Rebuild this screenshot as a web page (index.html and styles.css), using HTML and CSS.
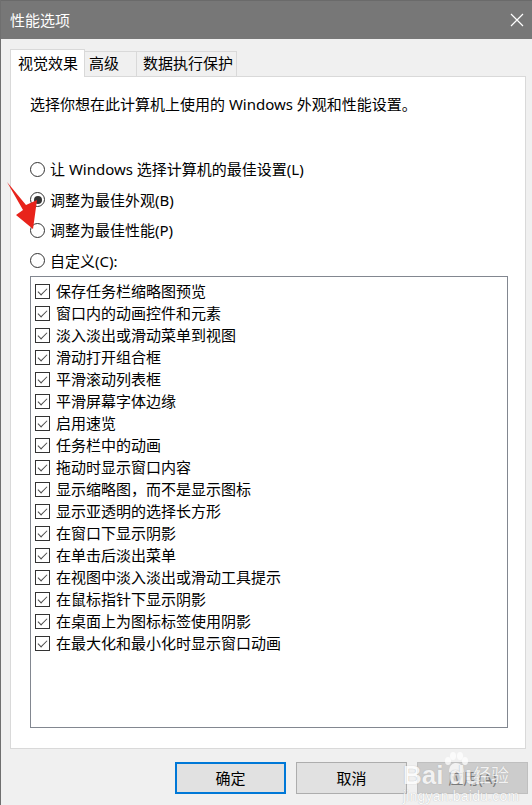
FILE: index.html
```html
<!DOCTYPE html>
<html lang="zh-CN">
<head>
<meta charset="utf-8">
<title>性能选项</title>
<link rel="stylesheet" href="styles.css">
</head>
<body>
<div class="window">
  <div class="titlebar">
    <span class="title">性能选项</span>
    <svg class="close" width="14" height="14" viewBox="0 0 14 14"><path d="M1 1 L13 13 M13 1 L1 13" stroke="#fff" stroke-width="1.2" fill="none"/></svg>
  </div>
  <div class="tabs">
    <div class="tab tab-1 active">视觉效果</div>
    <div class="tab tab-2">高级</div>
    <div class="tab tab-3">数据执行保护</div>
  </div>
  <div class="panel">
    <p class="desc">选择你想在此计算机上使用的 Windows 外观和性能设置。</p>
    <div class="radios">
      <div class="radio"><span class="rb"></span>让 Windows 选择计算机的最佳设置(L)</div>
      <div class="radio"><span class="rb checked"></span>调整为最佳外观(B)</div>
      <div class="radio"><span class="rb"></span>调整为最佳性能(P)</div>
      <div class="radio"><span class="rb"></span>自定义(C):</div>
    </div>
    <div class="list">
      <div class="item"><span class="cb"></span>保存任务栏缩略图预览</div>
      <div class="item"><span class="cb"></span>窗口内的动画控件和元素</div>
      <div class="item"><span class="cb"></span>淡入淡出或滑动菜单到视图</div>
      <div class="item"><span class="cb"></span>滑动打开组合框</div>
      <div class="item"><span class="cb"></span>平滑滚动列表框</div>
      <div class="item"><span class="cb"></span>平滑屏幕字体边缘</div>
      <div class="item"><span class="cb"></span>启用速览</div>
      <div class="item"><span class="cb"></span>任务栏中的动画</div>
      <div class="item"><span class="cb"></span>拖动时显示窗口内容</div>
      <div class="item"><span class="cb"></span>显示缩略图，而不是显示图标</div>
      <div class="item"><span class="cb"></span>显示亚透明的选择长方形</div>
      <div class="item"><span class="cb"></span>在窗口下显示阴影</div>
      <div class="item"><span class="cb"></span>在单击后淡出菜单</div>
      <div class="item"><span class="cb"></span>在视图中淡入淡出或滑动工具提示</div>
      <div class="item"><span class="cb"></span>在鼠标指针下显示阴影</div>
      <div class="item"><span class="cb"></span>在桌面上为图标标签使用阴影</div>
      <div class="item"><span class="cb"></span>在最大化和最小化时显示窗口动画</div>
    </div>
  </div>
  <div class="buttons">
    <div class="btn default">确定</div>
    <div class="btn">取消</div>
    <div class="btn disabled">应用(A)</div>
  </div>

  <svg class="arrow" width="45" height="60" viewBox="0 175 45 60">
    <polygon points="7,182 26,205 37,200 33,229 16,215 23,210" fill="#e8231b"/>
  </svg>

  <div class="watermark">
    <span class="wm-bai">Bai</span>
    <svg class="wm-paw" width="26" height="22" viewBox="0 0 26 22">
      <ellipse cx="5" cy="9" rx="3" ry="4" fill="#fff"/>
      <ellipse cx="10" cy="4" rx="3" ry="4" fill="#fff"/>
      <ellipse cx="17" cy="4" rx="3" ry="4" fill="#fff"/>
      <ellipse cx="22" cy="9" rx="3" ry="4" fill="#fff"/>
      <path d="M6 20 C6 13 10 11 13 11 C17 11 21 14 21 20 Z" fill="#fff"/>
    </svg>
    <span class="wm-du">du</span>
    <span class="wm-jy">经验</span>
    <span class="wm-url">jingyan.baidu.com</span>
  </div>
</div>
</body>
</html>
```

FILE: styles.css
```css
* { box-sizing: border-box; }

html, body {
  margin: 0;
  padding: 0;
}

body {
  font-family: "Noto Sans", "Noto Sans CJK SC", sans-serif;
  font-size: 15px;
  color: #000;
  background: #f0f0f0;
}

.window {
  position: relative;
  width: 532px;
  height: 805px;
  background: #f0f0f0;
  border-left: 1px solid #6f6f6f;
  overflow: hidden;
}

.titlebar {
  height: 39px;
  background: #777777;
  border-top: 1px solid #6a6a6a;
  display: flex;
  align-items: center;
  justify-content: space-between;
  padding: 0 8px 0 9px;
  color: #fff;
}

.title {
  font-size: 15px;
  line-height: 20px;
  margin-top: -1px;
}

.close {
  display: block;
  margin-top: -1px;
}

.tabs {
  display: flex;
  align-items: flex-end;
  height: 27px;
  margin: 10px 0 0 9px;
}

.tab {
  height: 25px;
  border-top: 1px solid #d9d9d9;
  border-right: 1px solid #d9d9d9;
  background: #f0f0f0;
  font-size: 15px;
  line-height: 23px;
  white-space: nowrap;
}

.tab-1 {
  width: 75px;
  padding-left: 7px;
}

.tab-2 {
  width: 52px;
  padding-left: 4px;
}

.tab-3 {
  width: 100px;
  padding-left: 6px;
}

.tab.active {
  position: relative;
  z-index: 1;
  height: 28px;
  margin-bottom: -1px;
  border-left: 1px solid #d9d9d9;
  background: #fff;
  line-height: 27px;
}

.panel {
  width: 516px;
  height: 673px;
  margin-left: 9px;
  background: #fff;
  border: 1px solid #d9d9d9;
  padding: 17px 0 0 19px;
}

.desc {
  margin: 0;
  height: 20px;
  line-height: 20px;
}

.radios {
  margin-top: 40px;
}

.radio {
  display: flex;
  align-items: center;
  height: 30.5px;
  line-height: 20px;
}

.rb {
  width: 15px;
  height: 15px;
  border: 1px solid #333;
  border-radius: 50%;
  margin-right: 5px;
  display: flex;
  align-items: center;
  justify-content: center;
  background: #fff;
}

.rb.checked::after {
  content: "";
  width: 8px;
  height: 8px;
  border-radius: 50%;
  background: #333;
}

.list {
  width: 478px;
  height: 452px;
  border: 1px solid #828790;
  padding: 3px 0 0 4px;
}

.item {
  display: flex;
  align-items: center;
  height: 22px;
  line-height: 20px;
}

.cb {
  width: 15px;
  height: 15px;
  border: 1px solid #333;
  margin-right: 6px;
  position: relative;
  background: #fff;
}

.cb::after {
  content: "";
  position: absolute;
  left: 4px;
  top: 1px;
  width: 4px;
  height: 8px;
  border-right: 1px solid #4a4a4a;
  border-bottom: 1px solid #4a4a4a;
  transform: rotate(45deg);
}

.buttons {
  display: flex;
  gap: 10px;
  margin-top: 13px;
  padding-left: 174px;
}

.btn {
  width: 111px;
  height: 32px;
  flex: none;
  background: #e1e1e1;
  border: 1px solid #adadad;
  display: flex;
  align-items: center;
  justify-content: center;
  font-size: 15px;
  line-height: 20px;
}

.btn.default {
  border: 2px solid #0078d7;
}

.btn.disabled {
  background: #cccccc;
  border-color: #bfbfbf;
  color: #7a7a7a;
}

.arrow {
  position: absolute;
  left: -1px;
  top: 175px;
}

.watermark {
  position: absolute;
  left: 402px;
  top: 752px;
  width: 130px;
  height: 53px;
  opacity: 0.75;
  pointer-events: none;
  color: #fff;
  text-shadow: 0 0 1px #999;
}

.wm-bai {
  position: absolute;
  left: 0;
  top: 8px;
  font-family: "Liberation Sans", sans-serif;
  font-weight: bold;
  font-size: 26px;
  line-height: 30px;
}

.wm-du {
  position: absolute;
  left: 46px;
  top: 8px;
  font-family: "Liberation Sans", sans-serif;
  font-weight: bold;
  font-size: 26px;
  line-height: 30px;
}

.wm-paw {
  position: absolute;
  left: 40px;
  top: 0;
}

.wm-jy {
  position: absolute;
  left: 70px;
  top: 12px;
  font-size: 18px;
  line-height: 22px;
}

.wm-url {
  position: absolute;
  left: 0;
  top: 36px;
  font-family: "Liberation Sans", sans-serif;
  font-size: 14px;
  line-height: 16px;
  letter-spacing: 0.2px;
}
```
